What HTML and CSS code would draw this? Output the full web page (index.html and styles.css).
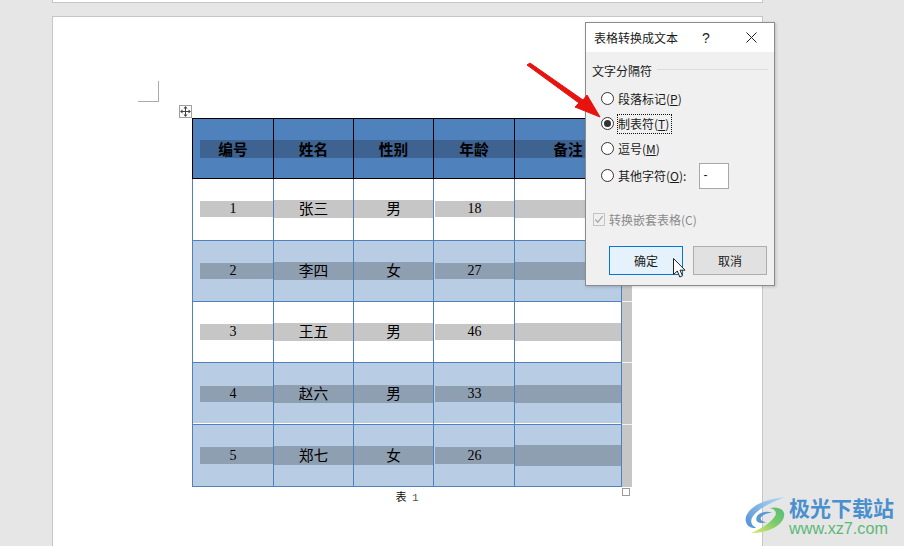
FILE: index.html
```html
<!DOCTYPE html>
<html lang="zh-CN">
<head>
<meta charset="utf-8">
<title>表格转换成文本</title>
<link rel="stylesheet" href="styles.css">
</head>
<body>
<main class="workspace">
  <div class="page-end"></div>
  <section class="page">
    <div class="crop-mark"></div>
    <div class="move-handle">
      <svg width="11" height="11" viewBox="0 0 11 11"><path d="M5.500 0 7.500 2.500H6V5h2.500V3.500L11 5.500 8.500 7.500V6H6V8.500H7.500L5.500 11 3.500 8.500H5V6H2.500V7.500L0 5.500 2.500 3.500V5H5V2.500H3.500Z" fill="#444"/></svg>
    </div>
    <div class="table-row">
      <table class="data">
        <thead>
          <tr class="head">
            <th class="c1"><span class="band first">编号</span></th>
            <th class="c2"><span class="band">姓名</span></th>
            <th class="c3"><span class="band">性别</span></th>
            <th class="c4"><span class="band">年龄</span></th>
            <th class="c5"><span class="band">备注</span></th>
          </tr>
        </thead>
        <tbody>
          <tr class="r1">
            <td><span class="band first num">1</span></td><td><span class="band">张三</span></td><td><span class="band">男</span></td><td><span class="band age num">18</span></td><td><span class="band">&nbsp;</span></td>
          </tr>
          <tr class="r2 alt">
            <td><span class="band first num">2</span></td><td><span class="band">李四</span></td><td><span class="band">女</span></td><td><span class="band age num">27</span></td><td><span class="band">&nbsp;</span></td>
          </tr>
          <tr class="r3">
            <td><span class="band first num">3</span></td><td><span class="band">王五</span></td><td><span class="band">男</span></td><td><span class="band age num">46</span></td><td><span class="band">&nbsp;</span></td>
          </tr>
          <tr class="r4 alt">
            <td><span class="band first num">4</span></td><td><span class="band">赵六</span></td><td><span class="band">男</span></td><td><span class="band age num">33</span></td><td><span class="band">&nbsp;</span></td>
          </tr>
          <tr class="r5 alt">
            <td><span class="band first num">5</span></td><td><span class="band">郑七</span></td><td><span class="band">女</span></td><td><span class="band age num">26</span></td><td><span class="band tall">&nbsp;</span></td>
          </tr>
        </tbody>
      </table>
      <div class="row-ends">
        <i class="e0"></i><i class="e1"></i><i class="e2"></i><i class="e3"></i><i class="e4"></i><i class="e5"></i>
        <b class="resize"></b>
      </div>
    </div>
    <p class="caption">表 <span class="caption-num">1</span></p>
  </section>
</main>

<div class="dialog">
  <header class="title-bar">
    <span class="title">表格转换成文本</span>
    <span class="help">?</span>
    <svg class="close" width="11" height="11" viewBox="0 0 11 11"><path d="M.5.5 10.500 10.500M10.500.5.500 10.500" stroke="#222" fill="none"/></svg>
  </header>
  <div class="dialog-body">
    <div class="group-label"><span>文字分隔符</span><i></i></div>
    <div class="radios">
      <div class="radio-row"><span class="radio"></span><span class="label">段落标记(<u>P</u>)</span></div>
      <div class="radio-row"><span class="radio on"></span><span class="label focus">制表符(<u>T</u>)</span></div>
      <div class="radio-row"><span class="radio"></span><span class="label">逗号(<u>M</u>)</span></div>
      <div class="radio-row other"><span class="radio"></span><span class="label">其他字符(<u>O</u>):</span><span class="field">-</span></div>
    </div>
    <div class="check-row">
      <span class="check"><svg width="11" height="11" viewBox="0 0 11 11"><path d="M1.500 5.500 4.200 8.500 9.500 1.800" stroke="#a9a9a9" stroke-width="1.400" fill="none"/></svg></span>
      <span>转换嵌套表格(C)</span>
    </div>
    <div class="buttons">
      <span class="btn primary">确定</span>
      <span class="btn">取消</span>
    </div>
  </div>
</div>

<svg class="arrow" width="90" height="70" viewBox="0 0 90 70">
  <path d="M1 3 4 1 57 38 61 33 74 55 49 45 53 41Z" fill="#e8120f" stroke="#e8120f" stroke-width="1" stroke-linejoin="round"/>
</svg>

<svg class="cursor" width="13" height="20" viewBox="0 0 13 20">
  <path d="M.5.5V16.500L4.300 13 6.800 19 9.500 17.800 7 12.200H12Z" fill="#fff" stroke="#222" stroke-width="1"/>
</svg>

<div class="logo">
  <svg width="45" height="41" viewBox="0 0 48 44">
    <defs>
      <linearGradient id="blue" x1="0" y1="1" x2="1" y2="0"><stop offset="0" stop-color="#4f8fd8"/><stop offset="1" stop-color="#b6dcf2"/></linearGradient>
      <linearGradient id="green" x1="0" y1="1" x2="1" y2="0"><stop offset="0" stop-color="#e6ea6a"/><stop offset=".55" stop-color="#7ccb6c"/><stop offset="1" stop-color="#54bd74"/></linearGradient>
    </defs>
    <path d="M44 1C26 3 8 8 2 22 0 30 6 36 13 34 7 32 6 26 10 21 18 11 32 6 44 1Z" fill="url(#blue)"/>
    <path d="M7 40C24 40 44 32 43 19 42 13 34 11 27 13 34 14 36 19 32 23 26 31 16 36 7 40Z" fill="url(#green)"/>
    <path d="M30 18C22 15 13 19 13 25 13 29 19 30 24 28 20 28 17 26 18 23 20 20 25 18 30 18Z" fill="#5b96d6"/>
  </svg>
  <div class="logo-text">
    <span class="logo-cn">极光下载站</span>
    <span class="logo-en">www.xz7.com</span>
  </div>
</div>
</body>
</html>
```

FILE: styles.css
```css
* { box-sizing: border-box; }

html, body {
  margin: 0;
  width: 904px;
  height: 546px;
  overflow: hidden;
  background: #e6e6e6;
}

body {
  position: relative;
  font-family: "Noto Sans CJK SC", "Liberation Sans", sans-serif;
  color: #000;
}

.workspace {
  height: 546px;
  padding-left: 52px;
  overflow: hidden;
}

.page-end {
  width: 711px;
  height: 3px;
  background: #fff;
  border: 1px solid #c6c6c6;
  border-top: 0;
}

.page {
  width: 711px;
  height: 600px;
  margin-top: 13px;
  background: #fff;
  border: 1px solid #c6c6c6;
  border-bottom: 0;
}

.crop-mark {
  width: 21px;
  height: 21px;
  margin: 64px 0 0 85px;
  border-right: 1px solid #ababab;
  border-bottom: 1px solid #ababab;
}

.move-handle {
  display: flex;
  align-items: center;
  justify-content: center;
  width: 13px;
  height: 13px;
  margin: 3px 0 0 126px;
  background: #fff;
  border: 1px solid #a0a0a0;
}

.table-row {
  display: flex;
  margin-left: 139px;
  align-items: flex-start;
}

.data {
  width: 430px;
  flex: none;
  table-layout: fixed;
  border-collapse: separate;
  border-spacing: 0;
  font-size: 14.67px;
}

.data th, .data td {
  padding: 0;
  text-align: center;
  vertical-align: middle;
  border-right: 1px solid #4f81bd;
  border-bottom: 1px solid #4f81bd;
  font-weight: 400;
}

.data tr > :first-child { border-left: 1px solid #4f81bd; }

.c1 { width: 82px; }
.c2 { width: 80px; }
.c3 { width: 80px; }
.c4 { width: 81px; }
.c5 { width: 107px; }

.data .head th {
  height: 61px;
  background: #4f81bd;
  font-weight: 700;
  border-top: 1px solid #000;
  border-color: #000;
}

.r1 td { height: 62px; }
.r2 td, .r3 td { height: 61px; }
.r4 td { height: 62px; box-shadow: inset 0 -1px #fff; }
.r5 td { height: 62px; }
.alt td { background: #b8cce4; }

.band {
  display: block;
  height: 18px;
  line-height: 16px;
  background: #c6c6c6;
}

.head .band { background: #3f6391; line-height: 18px; }
.alt .band { background: #8f9fb2; }
.r1 .band { margin-top: -1px; }
.r5 .band { height: 19px; line-height: 17px; }
.r5 .band.num { height: 17px; line-height: 17px; }
.r5 .band.tall { height: 21px; margin-top: -1px; }

.band.first {
  margin-left: 7px;
  padding-right: 7px;
}

.band.age { margin-left: 1px; }

.band.num {
  height: 16px;
  line-height: 16px;
  font-family: "Liberation Serif", serif;
  font-size: 14px;
}

.row-ends {
  display: flex;
  flex-direction: column;
  position: relative;
  width: 10px;
}

.row-ends i {
  display: block;
  background: #c6c6c6;
  border-bottom: 1px solid #f2f2f2;
}

.e0 { height: 61px; }
.e1 { height: 62px; }
.e2, .e3 { height: 61px; }
.e4 { height: 62px; }
.e5 { height: 62px; }

.row-ends i.e5 { border-bottom: 0; }

.resize {
  position: absolute;
  left: 0;
  top: 370px;
  width: 8px;
  height: 8px;
  background: #fff;
  border: 1px solid #9a9a9a;
}

.caption {
  width: 430px;
  margin: 1px 0 0 139px;
  text-align: center;
  font-size: 11px;
  line-height: 16px;
  word-spacing: 3px;
  color: #111;
}

.caption-num {
  font-family: "Liberation Mono", monospace;
  color: #555;
}

.arrow {
  position: absolute;
  left: 526px;
  top: 62px;
}

.dialog {
  position: absolute;
  left: 585px;
  top: 22px;
  width: 190px;
  height: 264px;
  background: #f0f0f0;
  border: 1px solid #8b8b8b;
  box-shadow: 1px 1px 3px rgba(0, 0, 0, .18);
  font-size: 12px;
  color: #1a1a1a;
}

.title-bar {
  display: flex;
  align-items: center;
  height: 29px;
  padding-left: 8px;
  background: #fff;
  position: relative;
}

.title { width: 108px; }

.help {
  font-size: 14px;
  font-family: "Liberation Sans", sans-serif;
}

.close {
  position: absolute;
  left: 160px;
  top: 9px;
}

.dialog-body { padding: 9px 6px 0; }

.group-label {
  display: flex;
  align-items: center;
  gap: 5px;
  height: 18px;
}

.group-label i {
  flex: 1;
  height: 1px;
  margin-top: -1px;
  background: #dcdcdc;
}

.radios {
  display: flex;
  flex-direction: column;
  margin: 7px 0 0 9px;
}

.radio-row {
  display: flex;
  align-items: center;
  height: 25px;
}

.radio-row.other { height: 29px; }

.radio {
  position: relative;
  flex: none;
  width: 13px;
  height: 13px;
  margin-right: 3px;
  background: #fff;
  border: 1px solid #333;
  border-radius: 50%;
}

.radio.on::after {
  content: "";
  position: absolute;
  left: 2px;
  top: 2px;
  width: 7px;
  height: 7px;
  border-radius: 50%;
  background: #333;
}

.label {
  padding: 0 2px 0 0;
  line-height: 18px;
  border: 1px dotted transparent;
  white-space: nowrap;
}

.label.focus { border-color: #111; }

.field {
  display: block;
  width: 30px;
  height: 26px;
  margin-left: 10px;
  padding-left: 3px;
  line-height: 22px;
  background: #fff;
  border: 1px solid #a8a8a8;
  font-family: "Liberation Sans", sans-serif;
}

.check-row {
  display: flex;
  align-items: center;
  gap: 4px;
  margin: 21px 0 0 1px;
  height: 16px;
  color: #8a8a8a;
}

.check {
  display: flex;
  align-items: center;
  justify-content: center;
  width: 12px;
  height: 13px;
  background: #efefef;
  border: 1px solid #c4c4c4;
}

.buttons {
  display: flex;
  gap: 10px;
  margin: 19px 0 0 17px;
}

.btn {
  width: 74px;
  height: 29px;
  line-height: 27px;
  text-align: center;
  background: #e1e1e1;
  border: 1px solid #adadad;
}

.btn.primary {
  background: #e5f1fb;
  border-color: #0078d7;
}

.cursor {
  position: absolute;
  left: 673px;
  top: 258px;
}

.logo {
  position: absolute;
  left: 744px;
  top: 496px;
  display: flex;
  align-items: flex-start;
}

.logo-text {
  display: flex;
  flex-direction: column;
}

.logo-cn {
  height: 24px;
  font-size: 21px;
  line-height: 23px;
  font-weight: 700;
  color: #4a8fce;
  white-space: nowrap;
}

.logo-en {
  font-family: "Liberation Sans", sans-serif;
  font-size: 16.200px;
  line-height: 17px;
  color: #5cb878;
  white-space: nowrap;
}
```
